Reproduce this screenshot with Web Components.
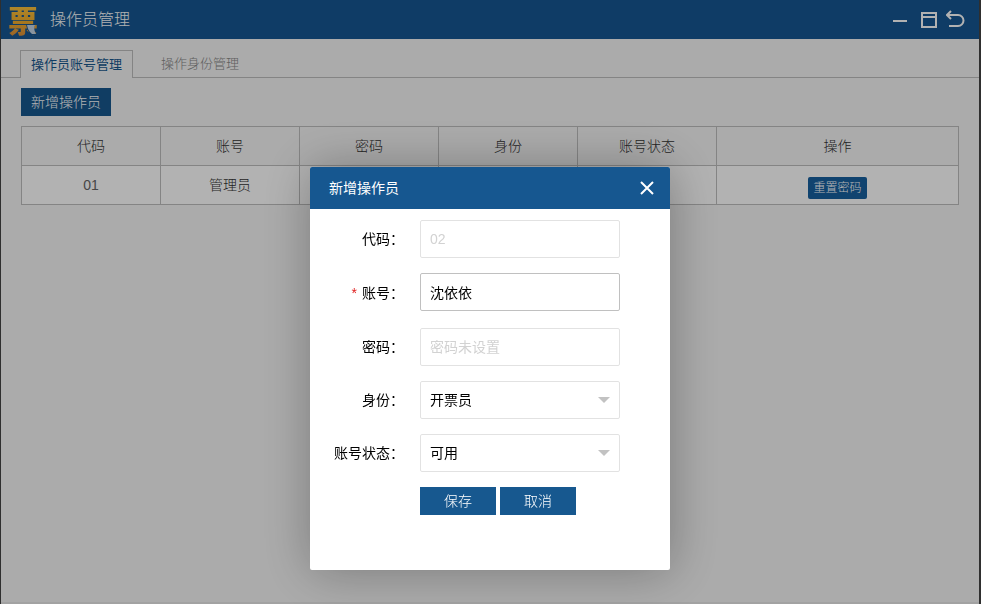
<!DOCTYPE html>
<html lang="zh-CN">
<head>
<meta charset="utf-8">
<title>操作员管理</title>
<style>
html, body { height: 100%; margin: 0; }
body { font-family: "Liberation Sans", "Noto Sans CJK SC", sans-serif; font-size: 14px; line-height: 20px; font-weight: 300; background: #f5f5f5; overflow: hidden; }
</style>
</head>
<body>
<app-window></app-window>
<modal-dialog heading="新增操作员">
  <form-row label="代码"><text-field name="code" value="02" label="代码" disabled></text-field></form-row>
  <form-row label="账号" required><text-field name="account" value="沈依依" label="账号" active></text-field></form-row>
  <form-row label="密码"><text-field name="password" placeholder="密码未设置" label="密码"></text-field></form-row>
  <form-row label="身份"><select-field label="身份" options="开票员,管理员"></select-field></form-row>
  <form-row label="账号状态"><select-field label="账号状态" options="可用,停用"></select-field></form-row>
  <action-button slot="actions" size="wide">保存</action-button>
  <action-button slot="actions" size="wide">取消</action-button>
</modal-dialog>
<script>
const define = (name, render) => customElements.define(name, class extends HTMLElement {
  connectedCallback() {
    if (this.shadowRoot) return;
    this.attachShadow({ mode: "open" }).innerHTML = render(this);
  }
});
const attr = (el, n) => el.getAttribute(n) || "";

define("action-button", () => `
<style>
:host { display: inline-block; }
button { display: block; height: 28px; padding: 0 10px; border: 0; background: #17588f; color: #fff; font: inherit; line-height: 28px; cursor: pointer; }
:host([size="wide"]) button { min-width: 76px; }
:host([size="small"]) button { height: 22px; padding: 0 5px; border-radius: 2px; font-size: 12px; line-height: 22px; background: #17609f; }
</style>
<button type="button"><slot></slot></button>`);

define("brand-logo", () => `
<style>
:host { display: block; position: relative; width: 32px; }
span { display: block; padding-top: 5px; font: 900 30px/34px "Liberation Sans", "Noto Sans CJK SC", sans-serif; color: transparent; background: linear-gradient(#ffcb45, #f0ad2c 55%, #d88a3c); -webkit-background-clip: text; background-clip: text; }
svg { position: absolute; right: 3px; bottom: 4px; }
</style>
<span>票</span>
<svg width="11" height="11" viewBox="0 0 11 11" aria-hidden="true"><path d="M0 0H9L7 8L11 11H5Q1 7 0 0Z" fill="#16538d"/><path d="M1 1H9Q7 5 10 10H6Q2 7 1 1Z" fill="#c5d5e4"/></svg>`);

define("title-bar", () => `
<style>
:host { display: flex; align-items: center; height: 39px; padding: 0 13px 0 7px; background: #165792; color: #fff; box-sizing: border-box; }
h1 { flex: 1; margin: 0 0 0 10px; font-size: 16px; font-weight: 300; line-height: 24px; }
nav { display: flex; gap: 7px; }
button { display: block; width: 20px; height: 20px; padding: 0; border: 0; background: none; color: inherit; }
svg { display: block; fill: none; stroke: currentColor; stroke-width: 2; }
</style>
<brand-logo></brand-logo>
<h1>操作员管理</h1>
<nav>
<button type="button" aria-label="最小化"><svg width="20" height="20"><path d="M1 11H15"/></svg></button>
<button type="button" aria-label="最大化"><svg width="20" height="20"><path d="M3 3H17V17H3ZM3 7H17"/></svg></button>
<button type="button" aria-label="返回"><svg width="20" height="20"><path d="M5 1L1 5L5 9M1 5H12A5.5 5.5 0 0 1 12 16H3"/></svg></button>
</nav>`);

define("tab-bar", () => `
<style>
:host { display: flex; gap: 17px; padding: 11px 19px 0; border-bottom: 1px solid #bebebe; font-size: 13px; }
button { display: block; height: 27px; padding: 0 10px; border: 1px solid transparent; border-bottom: 0; background: none; color: #888; font: inherit; line-height: 26px; }
button[aria-selected="true"] { height: 28px; margin-bottom: -1px; border-color: #bebebe; background: #f5f5f5; color: #17588f; font-weight: 400; }
</style>
<button type="button" role="tab" aria-selected="true">操作员账号管理</button>
<button type="button" role="tab" aria-selected="false">操作身份管理</button>`);

define("operator-table", () => `
<style>
:host { display: block; }
table { width: 100%; border-collapse: collapse; table-layout: fixed; color: #333; }
th, td { height: 38px; padding: 0; border: 1px solid #bebebe; text-align: center; font-weight: 300; line-height: 20px; }
th { width: 138px; }
th:last-child { width: auto; }
td { background: #fff; }
td:first-child { color: #666; }
action-button { vertical-align: middle; margin-top: 5px; }
</style>
<table>
<thead><tr><th>代码</th><th>账号</th><th>密码</th><th>身份</th><th>账号状态</th><th>操作</th></tr></thead>
<tbody><tr><td>01</td><td>管理员</td><td></td><td></td><td></td><td><action-button size="small">重置密码</action-button></td></tr></tbody>
</table>`);

define("app-window", () => `
<style>
:host { display: flex; flex-direction: column; height: 100%; box-sizing: border-box; border: solid #444; border-width: 0 2px 0 1px; background: #f5f5f5; }
main { flex: 1; padding: 10px 20px; border-bottom: 2px solid #e8e8e8; }
operator-table { margin-top: 10px; }
</style>
<title-bar></title-bar>
<tab-bar role="tablist"></tab-bar>
<main><action-button>新增操作员</action-button><operator-table></operator-table></main>`);

define("text-field", el => `
<style>
:host { display: block; }
input { display: block; width: 100%; height: 38px; box-sizing: border-box; padding: 0 9px; border: 1px solid #e2e2e2; border-radius: 2px; background: #fff; color: #000; font: inherit; outline: 0; }
input::placeholder, input:disabled { color: #d2d2d2; opacity: 1; }
:host([active]) input { border-color: #c0c0c0; }
</style>
<input type="text" aria-label="${attr(el, "label")}" name="${attr(el, "name")}" value="${attr(el, "value")}" placeholder="${attr(el, "placeholder")}" ${el.hasAttribute("disabled") ? "disabled" : ""}>`);

define("select-field", el => `
<style>
:host { display: grid; align-items: center; }
select, svg { grid-area: 1 / 1; }
select { width: 100%; height: 38px; box-sizing: border-box; padding: 0 30px 0 9px; border: 1px solid #e2e2e2; border-radius: 2px; background: #fff; color: #000; font: inherit; appearance: none; outline: 0; }
svg { justify-self: end; margin-right: 10px; pointer-events: none; }
</style>
<select aria-label="${attr(el, "label")}">${attr(el, "options").split(",").map(o => `<option>${o}</option>`).join("")}</select>
<svg width="12" height="6" aria-hidden="true"><path d="M0 0H12L6 6Z" fill="#c2c2c2"/></svg>`);

define("form-row", el => `
<style>
:host { display: grid; grid-template-columns: 94px 200px; column-gap: 16px; align-items: start; min-height: 38px; font-weight: 400; }
:host([required]) { min-height: 40px; }
label { align-self: center; text-align: right; color: #000; white-space: nowrap; }
b { color: #e02020; font-weight: 400; margin-right: 5px; }
</style>
<label>${el.hasAttribute("required") ? "<b>*</b>" : ""}${attr(el, "label")}：</label>
<slot></slot>`);

define("modal-dialog", el => `
<style>
:host { position: fixed; inset: 0; display: flex; justify-content: center; align-items: flex-start; padding: 167px 1px 0 0; background: rgba(0, 0, 0, .3); }
section { width: 360px; border-radius: 2px; overflow: hidden; background: #fff; box-shadow: 1px 1px 50px rgba(0, 0, 0, .3); }
header { display: flex; align-items: center; justify-content: space-between; height: 42px; padding: 0 15px 0 19px; background: #165790; color: #fff; }
h2 { margin: 0; font-size: 14px; font-weight: 400; line-height: 20px; }
header button { display: block; width: 16px; height: 16px; padding: 0; border: 0; background: none; color: inherit; }
svg { display: block; stroke: currentColor; stroke-width: 2; fill: none; }
form { display: flex; flex-direction: column; gap: 15px; padding: 11px 0 55px; }
footer { display: flex; gap: 4px; padding-left: 110px; }
</style>
<section role="dialog" aria-label="${attr(el, "heading")}">
<header><h2>${attr(el, "heading")}</h2><button type="button" aria-label="关闭"><svg width="16" height="16"><path d="M2 2L14 14M14 2L2 14"/></svg></button></header>
<form><slot></slot><footer><slot name="actions"></slot></footer></form>
</section>`);
</script>
</body>
</html>
